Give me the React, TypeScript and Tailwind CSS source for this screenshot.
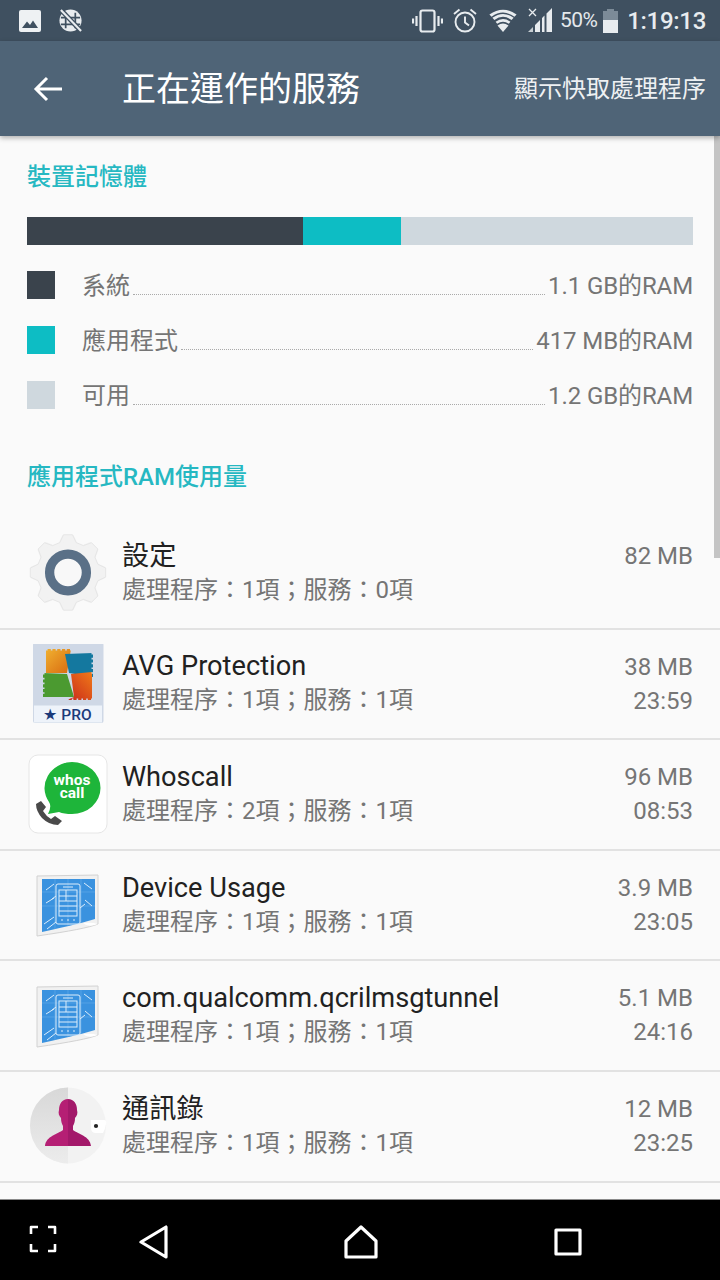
import React from "react";

const FONT = "[font-family:Roboto,'Noto_Sans_CJK_TC',sans-serif]";

function gearPath(cx: number, cy: number, outer: number, inner: number, teeth: number) {
  const pts: string[] = [];
  const step = (Math.PI * 2) / teeth;
  for (let i = 0; i < teeth; i++) {
    const a = -Math.PI / 2 + i * step;
    const o = [
      [inner, a - step * 0.34],
      [outer, a - step * 0.15],
      [outer, a + step * 0.15],
      [inner, a + step * 0.34],
    ];
    o.forEach(([r, t]) => pts.push(`${(cx + r * Math.cos(t)).toFixed(1)},${(cy + r * Math.sin(t)).toFixed(1)}`));
  }
  return pts.join(" ");
}

function GearIcon() {
  return (
    <svg width="80" height="80" viewBox="0 0 80 80">
      <polygon points={gearPath(40, 39.5, 36, 29, 8)} fill="#f2f2f2" stroke="#f2f2f2" strokeWidth="4" strokeLinejoin="round" />
      <polygon points={gearPath(40, 39.5, 38, 31, 8)} fill="none" stroke="#e6e6e6" strokeWidth="1" strokeLinejoin="round" />
      <circle cx="40" cy="39.5" r="18.4" fill="#f8f8f8" stroke="#5a7087" strokeWidth="9.3" />
    </svg>
  );
}

function AvgIcon() {
  return (
    <svg width="80" height="80" viewBox="0 0 80 80">
      <defs>
        <linearGradient id="avgO" x1="0" y1="0" x2="1" y2="1">
          <stop offset="0" stopColor="#f0b030" />
          <stop offset="1" stopColor="#d86a10" />
        </linearGradient>
        <linearGradient id="avgR" x1="0" y1="1" x2="1" y2="0">
          <stop offset="0" stopColor="#c8281c" />
          <stop offset="1" stopColor="#f07a18" />
        </linearGradient>
      </defs>
      <rect x="5" y="-1" width="70.5" height="80" rx="2" fill="#cfd8e6" />
      <rect x="6" y="61.5" width="68" height="17" fill="#eef3fa" />
      <path d="M18 5 H43 L39 29 H18 Z" fill="url(#avgO)" />
      <path d="M37 10 L65 9 V33 L41 29 Z" fill="#14789f" />
      <path d="M15 29 L39 30 L46 53 H15 Z" fill="#4b9a30" />
      <path d="M43 30 L64 28 V56 H39 L46 53 Z" fill="url(#avgR)" />
      <g fill="none" stroke="#cfd8e6" strokeWidth="3">
        <path d="M18 5 H43" strokeDasharray="1.6 3.2" />
        <path d="M65 9 V33" strokeDasharray="1.6 3.2" />
        <path d="M15 29 V53" strokeDasharray="1.6 3.2" />
        <path d="M39 56 H64" strokeDasharray="1.6 3.2" />
      </g>
      <text x="39.5" y="76" textAnchor="middle" fontFamily="Roboto, sans-serif" fontSize="15.5" fontWeight="500" fill="#1b3a7a">★ PRO</text>
    </svg>
  );
}

function WhoscallIcon() {
  return (
    <svg width="80" height="80" viewBox="0 0 80 80">
      <rect x="1" y="1" width="78" height="78" rx="9" fill="#ffffff" stroke="#e6e6e6" />
      <path d="M44 8 A28.5 26 0 1 1 44 60 Q36 60 31 58 L20 60 Q24 52 21 48 A28.5 26 0 0 1 44 8 Z" fill="#1eb53a" />
      <text x="44" y="31" textAnchor="middle" fontFamily="Roboto, sans-serif" fontWeight="700" fontSize="15.5" fill="#ffffff">whos</text>
      <text x="44" y="44" textAnchor="middle" fontFamily="Roboto, sans-serif" fontWeight="700" fontSize="15.5" fill="#ffffff">call</text>
      <path d="M8 50 L13 47 L18 53 L15 57 Q18 62 23 65 L27 62 L34 67 L30 71 Q21 71 14 64 Q8 57 8 50 Z" fill="#4a4a4a" />
    </svg>
  );
}

function BlueprintIcon() {
  return (
    <svg width="80" height="80" viewBox="0 0 80 80" className="translate-y-[1px]">
      <path d="M9 10 L70 9 V58 Q58 63 9 70 Z" fill="#f1f1f1" stroke="#d2d2d2" />
      <path d="M14 13 H67 V53 Q55 57 14 66 Z" fill="#3a92df" />
      <path d="M40 13 V60 M14 26 H67 M14 40 H67 M27 13 V63 M53 13 V57" stroke="#5aa6e6" strokeWidth="0.8" fill="none" />
      <g fill="none" stroke="#dcedfb" strokeWidth="1">
        <rect x="28" y="18" width="24" height="40" rx="2" />
        <rect x="31" y="24" width="18" height="26" />
        <path d="M31 30 H49 M31 35 H49 M31 40 H49 M31 45 H49 M38 24 V35 M35 21 H45 M33 54 H35 M39 54 H41 M45 54 H47" />
        <path d="M18 24 L26 18 M56 17 L64 23 M18 37 L26 32 M57 34 L64 40 M16 58 L26 51 M19 63 L28 56 M28 30 L24 33 M52 42 L57 38" />
      </g>
      <path d="M55 57 Q63 56 70 58 Q60 62 55 57 Z" fill="#ffffff" />
    </svg>
  );
}

function ContactsIcon() {
  return (
    <svg width="80" height="80" viewBox="0 0 80 80">
      <defs>
        <linearGradient id="ctL" x1="0" y1="0" x2="0" y2="1">
          <stop offset="0" stopColor="#d8d8d8" />
          <stop offset="1" stopColor="#ececec" />
        </linearGradient>
      </defs>
      <circle cx="40" cy="39.5" r="38" fill="#f2f2f2" />
      <path d="M40 1.5 A38 38 0 0 0 40 77.5 Z" fill="url(#ctL)" />
      <path d="M40 13 C34 13 31 18 31 24 C30 27 31 30 33 32 C33 36 34 38 35 40 L35 44 C30 48 18 50 17 60 L40 60 Z" fill="#b51f74" />
      <path d="M40 13 C46 13 49 18 49 24 C50 27 49 30 47 32 C47 36 46 38 45 40 L45 44 C50 48 62 50 63 60 L40 60 Z" fill="#a3196a" />
      <path d="M63 34 H76 Q79 34 78 38 Q77 44 75 47 H68 Q63 47 63 42 Z" fill="#ffffff" />
      <circle cx="68" cy="40" r="2.1" fill="#222222" />
    </svg>
  );
}

const rows = [
  { icon: <GearIcon />, name: "設定", sub: "處理程序：1項；服務：0項", size: "82 MB", time: "" },
  { icon: <AvgIcon />, name: "AVG Protection", sub: "處理程序：1項；服務：1項", size: "38 MB", time: "23:59" },
  { icon: <WhoscallIcon />, name: "Whoscall", sub: "處理程序：2項；服務：1項", size: "96 MB", time: "08:53" },
  { icon: <BlueprintIcon />, name: "Device Usage", sub: "處理程序：1項；服務：1項", size: "3.9 MB", time: "23:05" },
  { icon: <BlueprintIcon />, name: "com.qualcomm.qcrilmsgtunnel", sub: "處理程序：1項；服務：1項", size: "5.1 MB", time: "24:16" },
  { icon: <ContactsIcon />, name: "通訊錄", sub: "處理程序：1項；服務：1項", size: "12 MB", time: "23:25" },
];

const legend = [
  { color: "bg-[#3a434c]", label: "系統", value: "1.1 GB的RAM" },
  { color: "bg-[#0dbdc4]", label: "應用程式", value: "417 MB的RAM" },
  { color: "bg-[#cfd8de]", label: "可用", value: "1.2 GB的RAM" },
];

function StatusIcons() {
  return (
    <div className="flex items-center">
      <svg width="31" height="24" viewBox="0 0 31 24" className="mr-[10px]" fill="none" stroke="#e8ecef" strokeWidth="2.2">
        <rect x="8.5" y="1.5" width="14" height="21" rx="2" />
        <path d="M4.5 7 V17 M1 9.5 V14.5 M26.5 7 V17 M30 9.5 V14.5" />
      </svg>
      <svg width="24" height="25" viewBox="0 0 24 25" className="mr-[12px]" fill="none" stroke="#e8ecef" strokeWidth="1.9">
        <circle cx="12" cy="14" r="9.5" />
        <path d="M12 8.5 V14.5 L16 17.5 M1 6 L6.5 1.5 M23 6 L17.5 1.5" />
      </svg>
      <svg width="28" height="24" viewBox="0 0 28 24" className="mr-[11px]" fill="#e8ecef">
        <path d="M14 23 L8.5 16.5 Q14 12.5 19.5 16.5 Z" />
        <path d="M6.6 14 Q14 8.5 21.4 14 L19.8 16 Q14 11.8 8.2 16 Z" transform="translate(0,-1.2)" />
        <path d="M3.4 10.2 Q14 2.4 24.6 10.2 L22.6 12.4 Q14 6 5.4 12.4 Z" transform="translate(0,-1.4)" />
        <path d="M0.4 6.6 Q14 -3.2 27.6 6.6 L25.4 8.8 Q14 0.4 2.6 8.8 Z" transform="translate(0,-1)" />
      </svg>
      <svg width="24" height="25" viewBox="0 0 24 25" className="mr-[8px]" fill="#e8ecef">
        <path d="M1 1 L8 8 M8 1 L1 8" stroke="#e8ecef" strokeWidth="1.3" />
        <path d="M0 24 L5 19 V24 Z" opacity="0.8" />
        <path d="M7 24 V17 L12 12 V24 Z M14 24 V10 L16.5 7.5 V24 Z M18.5 24 V5.5 L24 0 V24 Z" />
      </svg>
      <span className="text-[21px] leading-none text-[#e4e8ec] tracking-[-0.6px] mr-[6px]">50%</span>
      <div className="w-[15px] h-[24px] mr-[9px] flex flex-col items-center">
        <div className="w-[7px] h-[2px] bg-[#7c8b98]" />
        <div className="w-[15px] h-[9px] bg-[#7c8b98]" />
        <div className="w-[15px] flex-1 bg-[#e8ecef]" />
      </div>
      <span className="text-[24px] font-medium leading-none text-[#e8ecef] pt-[1px] tracking-[-0.3px]">1:19:13</span>
    </div>
  );
}

export default function App() {
  return (
    <div className={`${FONT} w-[720px] h-[1280px] flex flex-col overflow-hidden bg-[#fafafa]`}>
      <div className="h-[41px] shrink-0 bg-[#3f5060] flex items-center justify-between pl-[19px] pr-[14px]">
        <div className="flex items-center gap-[17px]">
          <svg width="22" height="22" viewBox="0 0 22 22">
            <rect width="22" height="22" rx="2" fill="#eef1f3" />
            <path d="M3 18 L8 11.5 L11 15 L14 10.5 L19 18 Z" fill="#3f5060" />
          </svg>
          <svg width="25" height="25" viewBox="0 0 26 26" fill="none">
            <circle cx="13" cy="13" r="11.5" fill="#e8ecef" />
            <path d="M8 5 V21 M18 5 V21 M3 10 H23 M3 17 H23" stroke="#3f5060" strokeWidth="1.8" />
            <path d="M3 2 L24 24" stroke="#3f5060" strokeWidth="5" />
            <path d="M3 2 L24 24" stroke="#e8ecef" strokeWidth="2.2" />
          </svg>
        </div>
        <StatusIcons />
      </div>

      <div className="h-[95px] shrink-0 bg-[#4f6477] flex items-center pl-[33px] pr-[14px] shadow-[0_2px_5px_rgba(0,0,0,0.3)] relative z-10">
        <svg width="30" height="28" viewBox="0 0 30 28" fill="none" stroke="#ffffff" strokeWidth="3" className="mr-[59px]">
          <path d="M29 14 H3 M14 3 L3 14 L14 25" />
        </svg>
        <span className="text-[34px] text-white leading-none">正在運作的服務</span>
        <span className="ml-auto text-[24px] text-[#eef1f3] leading-none">顯示快取處理程序</span>
      </div>

      <div className="flex-1 min-h-0 relative overflow-hidden">
        <div className="absolute right-0 top-0 w-[6px] h-[422px] bg-[#c4c4c4]" />
        <div className="px-[27px] pt-[26px]">
          <div className="text-[24px] font-medium leading-[30px] text-[#26b8c2]">裝置記憶體</div>
          <div className="flex h-[28px] mt-[25px]">
            <div className="w-[276px] bg-[#3a434c]" />
            <div className="w-[98px] bg-[#0dbdc4]" />
            <div className="flex-1 bg-[#cfd8de]" />
          </div>
          <div className="mt-[26px] flex flex-col gap-[27px]">
            {legend.map((l) => (
              <div key={l.label} className="flex items-center h-[28px]">
                <div className={`w-[28px] h-[28px] shrink-0 ${l.color}`} />
                <span className="ml-[27px] text-[24px] leading-none text-[#757575] pt-[2px]">{l.label}</span>
                <div className="flex-1 self-start mt-[23px] mx-[3px] border-b border-dotted border-[#aaaaaa]" />
                <span className="text-[24px] leading-none text-[#757575] pt-[2px] tracking-[-0.1px]">{l.value}</span>
              </div>
            ))}
          </div>
          <div className="mt-[53px] text-[24px] font-medium leading-[30px] text-[#26b8c2]">應用程式RAM使用量</div>
        </div>

        <div className="mt-[27px]">
          {rows.map((r) => (
            <div key={r.name + r.size} className="h-[110.6px] border-b-2 border-[#e2e2e2] flex items-center pl-[28px] pr-[27px]">
              <div className="w-[80px] h-[80px] shrink-0">{r.icon}</div>
              <div className="ml-[14px] flex-1 min-w-0 flex flex-col gap-[3px] pb-[1px]">
                <div className="text-[27.2px] leading-[31px] text-[#212121]">{r.name}</div>
                <div className="text-[24px] leading-[30px] text-[#757575]">{r.sub}</div>
              </div>
              <div className="self-stretch pt-[22px] flex flex-col items-end gap-[4px] text-[24px] text-[#757575]">
                <div className="leading-[30px]">{r.size}</div>
                {r.time && <div className="leading-[30px]">{r.time}</div>}
              </div>
            </div>
          ))}
        </div>
      </div>

      <div className="h-[81px] shrink-0 bg-black border-t border-[#8a8a8a] flex items-center pt-[4px]">
        <svg width="28" height="28" viewBox="0 0 28 28" fill="none" stroke="#ffffff" strokeWidth="2.6" className="ml-[29px] -translate-y-[3px]" strokeLinejoin="round">
          <path d="M9 2 H2 V9 M19 2 H26 V9 M2 19 V26 H9 M26 19 V26 H19" />
        </svg>
        <svg width="30" height="34" viewBox="0 0 30 34" fill="none" stroke="#ffffff" strokeWidth="3.2" strokeLinejoin="round" className="ml-[82px]">
          <path d="M27 2 V32 L2 17 Z" />
        </svg>
        <svg width="34" height="34" viewBox="0 0 34 34" fill="none" stroke="#ffffff" strokeWidth="3.2" strokeLinejoin="round" className="ml-[175px]">
          <path d="M17 2 L32 16 V32 H2 V16 Z" />
        </svg>
        <svg width="28" height="28" viewBox="0 0 28 28" fill="none" stroke="#ffffff" strokeWidth="3.2" strokeLinejoin="round" className="ml-[176px]">
          <rect x="2" y="2" width="24" height="24" />
        </svg>
      </div>
    </div>
  );
}
